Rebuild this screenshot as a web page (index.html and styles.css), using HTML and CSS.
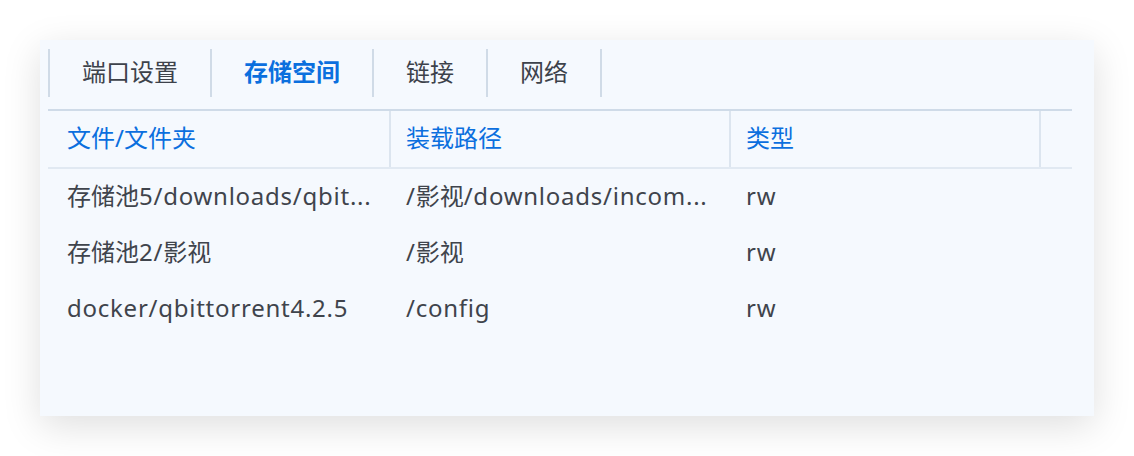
FILE: index.html
```html
<!DOCTYPE html>
<html lang="zh-CN">
<head>
<meta charset="utf-8">
<title>存储空间</title>
<link rel="stylesheet" href="styles.css">
</head>
<body>
<div class="card">
  <div class="tabs">
    <div class="tab">端口设置</div>
    <div class="tab active">存储空间</div>
    <div class="tab">链接</div>
    <div class="tab">网络</div>
  </div>
  <div class="table">
    <div class="row head">
      <div class="cell c1">文件/文件夹</div>
      <div class="cell c2">装载路径</div>
      <div class="cell c3">类型</div>
      <div class="cell c4"></div>
    </div>
    <div class="row">
      <div class="cell c1">存储池<span class="lt">5/downloads/qbit...</span></div>
      <div class="cell c2"><span class="lt">/</span>影视<span class="lt">/downloads/incom...</span></div>
      <div class="cell c3"><span class="lt">rw</span></div>
      <div class="cell c4"></div>
    </div>
    <div class="row">
      <div class="cell c1">存储池<span class="lt">2/</span>影视</div>
      <div class="cell c2"><span class="lt">/</span>影视</div>
      <div class="cell c3"><span class="lt">rw</span></div>
      <div class="cell c4"></div>
    </div>
    <div class="row">
      <div class="cell c1"><span class="lt">docker/qbittorrent4.2.5</span></div>
      <div class="cell c2"><span class="lt">/config</span></div>
      <div class="cell c3"><span class="lt">rw</span></div>
      <div class="cell c4"></div>
    </div>
  </div>
</div>
</body>
</html>
```
FILE: styles.css
```css
html, body {
  margin: 0;
  padding: 0;
  background: #ffffff;
}
body {
  padding: 40px;
  font-family: "Noto Sans", "Noto Sans CJK SC", sans-serif;
  font-size: 24px;
  color: #3f444c;
}
.card {
  box-sizing: border-box;
  width: 1054px;
  height: 376px;
  background: #f5f9fe;
  box-shadow: 0 10px 36px rgba(0, 0, 0, 0.13);
  padding: 9px 22px 0 8px;
}
.tabs {
  display: flex;
  height: 48px;
  border-left: 2px solid #d0dbe7;
}
.tab {
  display: flex;
  align-items: center;
  padding: 0 32px 3px;
  border-right: 2px solid #d0dbe7;
  color: #3d424b;
  font-family: "Noto Sans CJK SC", sans-serif;
  line-height: 1.2;
}
.tab.active {
  color: #0b6fde;
  font-weight: 700;
}
.table {
  margin-top: 12px;
  border-top: 2px solid #cfdbe8;
}
.row {
  display: grid;
  grid-template-columns: 341px 340px 310px 1fr;
  height: 56px;
  align-items: center;
}
.row.head {
  border-bottom: 2px solid #e1e9f2;
  color: #0b6fde;
}
.row.head .cell {
  height: 100%;
}
.cell {
  box-sizing: border-box;
  display: flex;
  align-items: center;
  padding-left: 17px;
  padding-bottom: 2px;
  white-space: pre;
  line-height: 1.4;
}
.cell.c1 {
  padding-left: 19px;
}
.lt {
  letter-spacing: 0.75px;
}
.row.head .c2,
.row.head .c3,
.row.head .c4 {
  border-left: 2px solid #dce5ef;
  padding-left: 15px;
}
```
